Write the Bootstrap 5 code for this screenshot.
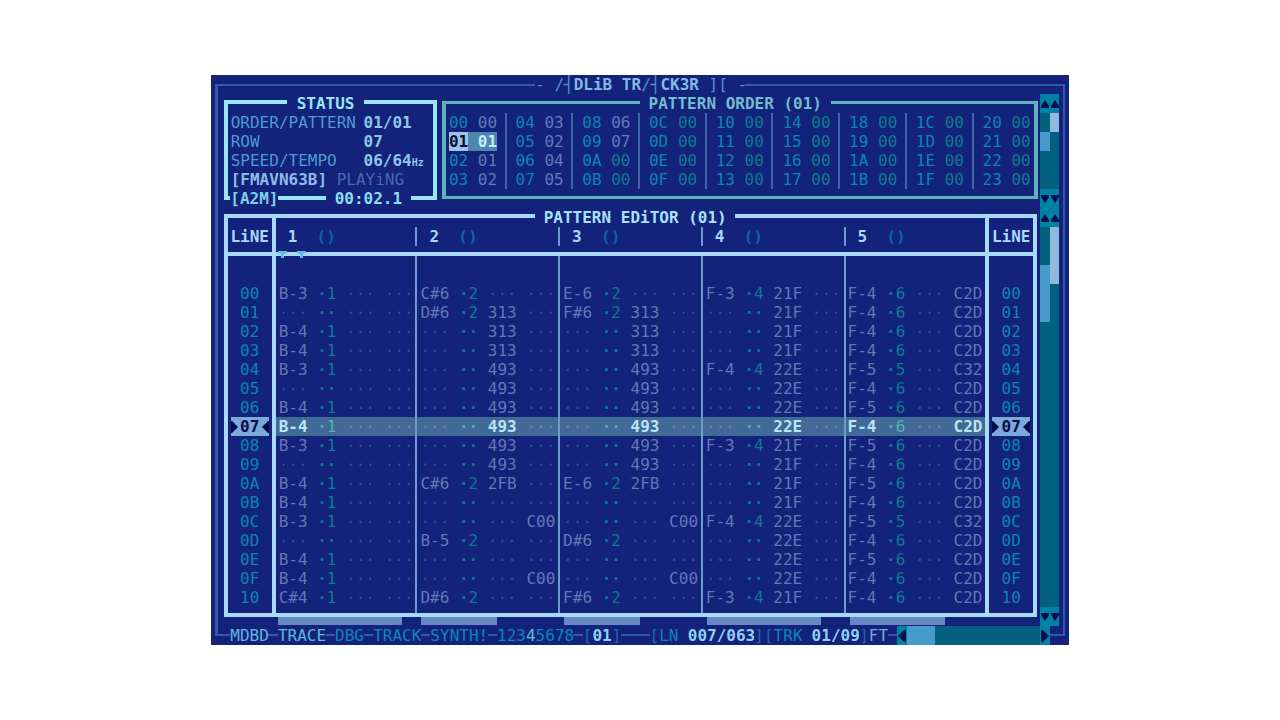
<!DOCTYPE html>
<html lang="en">
<head>
<meta charset="utf-8">
<meta name="viewport" content="width=device-width, initial-scale=1">
<title>AdLib Tracker ][</title>
<link href="https://cdn.jsdelivr.net/npm/bootstrap@5.3.0/dist/css/bootstrap.min.css" rel="stylesheet">
<style>
  :root { --ink:#13227a; --pale:#a9d9f6; --ice:#9be5f5; --sea:#62b2bd; --cyan:#0a86b0; --teal:#0a7c92; --grey:#6377b4; --rule:#7099d2; --faint:#334c98; }
  body { background:#fff; font-family:"DejaVu Sans Mono","Liberation Mono",monospace; font-size:16px; line-height:19px; }
  /* 90 text columns by 30 text rows */
  .screen { width:67vw; min-width:800px; background:var(--ink); color:var(--pale); display:grid; grid-template-columns:repeat(90,minmax(0,1fr)); grid-auto-rows:minmax(19px,auto); }
  .on, .foot, .mode, .order-list > div, .editor td, .editor thead span { white-space:pre; }
  .frame { grid-column:1/-1; grid-row:1/31; margin:9px 4px; border:2px solid #315aa9; border-left-width:3px; }
  .on { background:var(--ink); z-index:1; }
  .headline { grid-area:1/35/2/57; color:#5a8fc8; font-size:16px; line-height:19px; font-weight:400; }
  .headline b { color:#82b9e5; }
  .status { grid-area:2/2/8/25; margin:6px 3px 8px; border:4px solid var(--ice); padding:9px 3px 0; color:#4c9ccf; }
  .status dl { display:grid; grid-template-columns:2fr 1fr; }
  .status dt { font-weight:400; } .status dd { color:#8fc6e6; font-weight:700; }
  .hz { font-size:10px; line-height:10px; }
  .t-status { grid-area:2/9/3/17; color:var(--ice); }
  .t-file { grid-area:7/3/8/8; color:#7fd0ea; }
  .t-time { grid-area:7/13/8/22; color:#90dcf2; }
  .order { grid-area:2/25/8/88; margin:7px 2px 9px; border:4px solid var(--sea); border-width:3px 4px; padding-top:9px; overflow:hidden; }
  .order-list { display:grid; grid-template-columns:repeat(9,1fr); margin:0 -6px; }
  .order-list > div { padding-left:9px; border-right:2px solid #3f62a8; color:var(--cyan); }
  .order-list > div:last-child { border-right:0; }
  .order-list .used { color:#6579b8; } .order-list .unused { color:var(--teal); }
  .order-list .now { background:#5085ad; color:#c3ecff; font-weight:700; display:inline-block; }
  .order-list .now i { background:#9cc4e6; color:#060d38; font-style:normal; display:inline-block; }
  .t-order { grid-area:2/46/3/66; color:#73bccb; }
  .t-editor { grid-area:8/35/9/56; color:#a8e1fa; }
  .editor { grid-area:8/2/30/88; margin:6px 3px 9px; border:4px solid var(--pale); }
  .editor table { width:100%; table-layout:fixed; border-collapse:separate; border-spacing:0; }
  .editor th { font-weight:400; padding:0; }
  .editor thead th { height:38px; padding-top:9px; border-bottom:4px solid var(--pale); vertical-align:top; font-weight:700; }
  .editor thead span { display:block; height:19px; }
  .editor thead .trk span { border-right:2px solid var(--rule); padding-left:12px; }
  .editor thead .trk.edge span { border-right:0; }
  .editor thead em { font-style:normal; color:#0a659b; }
  .editor td { padding:0 0 0 3px; color:var(--grey); border-right:2px solid var(--rule); overflow:hidden; }
  .editor tr > .edge { border-right:4px solid var(--pale); }
  .editor td.edge { padding-left:2px; }
  .editor tbody th { text-align:center; color:var(--cyan); }
  .editor .gap td, .editor .gap th { height:28px; } .editor .tail td, .editor .tail th { height:6px; line-height:0; }
  .editor s { text-decoration:none; color:var(--faint); } .editor u { text-decoration:none; color:var(--teal); }
  .editor .now td { background:#426a96; color:#b9e5fb; font-weight:700; background-clip:padding-box; }
  .editor .now td s { color:#6484a8; font-weight:400; } .editor .now td u { color:#53b0b4; font-weight:400; }
  .editor .now th mark { background:#7aa9da; color:#060d48; padding:0; display:flex; align-items:center; justify-content:space-between; margin:0 3px; font-weight:700; }
  .editor mark svg { fill:#060d48; }
  .marker { z-index:2; grid-row:10; fill:#62bfe0; margin-top:5px; }
  .usage { grid-row:29; height:8px; margin-top:10px; background:#6788c4; z-index:1; }
  .foot { grid-row:30; }
  .foot.a { color:#5fb8e0; } .foot.b { color:#0a86bc; } .foot.c, .foot .lit { color:#8fd0f0; font-weight:700; } .foot.e { color:#1b68ac; }
  .bar { background:#00607e; display:grid; z-index:1; }
  .bar-v { grid-column:88/90; grid-template-columns:1fr 1fr; grid-auto-rows:19px; }
  .bar-h { grid-area:30/73/31/89; grid-template-columns:repeat(16,1fr); }
  .bar button { border:0; padding:0; background:#0082a4; grid-column:1/-1; display:flex; align-items:center; justify-content:center; }
  .bar-h button { grid-column:auto; }
  .bar svg { fill:#07104e; display:block; }
  .th-a { background:#479bcb; } .th-b { background:#91b9dc; }
</style>
</head>
<body class="min-vh-100 d-flex align-items-center justify-content-center">
<main class="screen">
  <div class="frame"></div>
  <h1 class="headline on m-0">- ∕┤<b>DLiB TR</b>∕┤<b>CK3R</b> ][ -</h1>

  <section class="status">
    <dl class="m-0"><dt>ORDER/PATTERN</dt><dd class="m-0">01/01</dd><dt>ROW</dt><dd class="m-0">07</dd><dt>SPEED/TEMPO</dt><dd class="m-0">06/64<span class="hz">Hz</span></dd></dl>
    <div class="mode"><span style="color:#8ebce6" class="fw-bold">[FMAVN63B]</span> <span style="color:#496bae">PLAYiNG</span></div>
  </section>
  <div class="t-status on text-center fw-bold">STATUS</div>
  <div class="t-file on fw-bold">[A2M]</div>
  <div class="t-time on text-center fw-bold">00:02.1</div>

  <section class="order"><div class="order-list" id="orders"></div></section>
  <div class="t-order on text-center fw-bold">PATTERN ORDER (01)</div>

  <section class="editor">
    <table>
      <colgroup><col style="width:5.95%"><col style="width:17.6%"><col style="width:17.72%"><col style="width:17.72%"><col style="width:17.72%"><col style="width:17.84%"><col style="width:5.45%"></colgroup>
      <thead><tr>
        <th class="edge text-center"><span>LiNE</span></th>
        <th class="trk"><span>1  <em>()</em></span></th><th class="trk"><span>2  <em>()</em></span></th><th class="trk"><span>3  <em>()</em></span></th><th class="trk"><span>4  <em>()</em></span></th><th class="trk edge"><span>5  <em>()</em></span></th>
        <th class="text-center"><span>LiNE</span></th>
      </tr></thead>
      <tbody id="lines"></tbody>
    </table>
  </section>
  <div class="t-editor on text-center fw-bold">PATTERN EDiTOR (01)</div>
  <svg class="marker" style="grid-column:8/11" width="28" height="8" viewBox="0 0 28 8"><path d="M0 0h9v2l-3 1v4H3V3L0 2zM19 0h9v2l-3 1v4h-3V3l-3-1z"/></svg>

  <div class="usage" style="grid-column:8/21"></div>
  <div class="usage" style="grid-column:23/31"></div>
  <div class="usage" style="grid-column:38/46"></div>
  <div class="usage" style="grid-column:53/65"></div>
  <div class="usage" style="grid-column:68/78"></div>

  <div class="foot on a" style="grid-column:3/7">MDBD</div>
  <div class="foot on a" style="grid-column:8/13">TRACE</div>
  <div class="foot on b" style="grid-column:14/17">DBG</div>
  <div class="foot on b" style="grid-column:18/23">TRACK</div>
  <div class="foot on b" style="grid-column:24/30">SYNTH!</div>
  <div class="foot on b" style="grid-column:31/39">123<span style="color:#62bde5">4</span>5678</div>
  <div class="foot on e" style="grid-column:40/44">[<span class="lit">01</span>]</div>
  <div class="foot on e" style="grid-column:47/50">[<span style="color:#0a86bc">LN</span></div>
  <div class="foot on c" style="grid-column:50/58"> 007/063</div>
  <div class="foot on e" style="grid-column:58/63">][<span style="color:#0a86bc">TRK</span></div>
  <div class="foot on c" style="grid-column:63/69"> 01/09</div>
  <div class="foot on e" style="grid-column:69/72">]<span style="color:#74a7df">FT</span></div>

  <div class="bar bar-v" style="grid-row:2/8">
    <button type="button" aria-label="Orders up"><svg width="18" height="8" viewBox="0 0 18 8"><path d="M4 0 8 6V8H0V6zM14 0l4 6V8h-8V6z"/></svg></button>
    <span class="th-b" style="grid-area:2/2/3/3"></span><span class="th-a" style="grid-area:3/1/4/2"></span>
    <button type="button" aria-label="Orders down" style="grid-row:6"><svg width="18" height="8" viewBox="0 0 18 8"><path d="M0 0H8V2L4 8 0 2zM10 0h8V2l-4 6-4-6z"/></svg></button>
  </div>
  <div class="bar bar-v" style="grid-row:8/30">
    <button type="button" aria-label="Lines up"><svg width="18" height="8" viewBox="0 0 18 8"><path d="M4 0 8 6V8H0V6zM14 0l4 6V8h-8V6z"/></svg></button>
    <span class="th-b" style="grid-area:2/2/5/3"></span><span class="th-a" style="grid-area:4/1/7/2"></span>
    <button type="button" aria-label="Lines down" style="grid-row:22"><svg width="18" height="8" viewBox="0 0 18 8"><path d="M0 0H8V2L4 8 0 2zM10 0h8V2l-4 6-4-6z"/></svg></button>
  </div>
  <div class="bar bar-h">
    <button type="button" aria-label="Tracks left"><svg width="8" height="12" viewBox="0 0 8 12"><path d="M0 6 6 0h2v12H6z"/></svg></button>
    <span class="th-a" style="grid-column:2/5"></span>
    <button type="button" aria-label="Tracks right" style="grid-column:16"><svg width="8" height="12" viewBox="0 0 8 12"><path d="M8 6 2 0H0v12h2z"/></svg></button>
  </div>
</main>
<script>
  const hex = n => n.toString(16).toUpperCase().padStart(2, '0');

  // song order: nine groups of four positions
  const order = ['00','01','01','02','03','02','04','05','06','07'];
  let groups = '';
  for (let g = 0; g < 9; g++) {
    groups += '<div>';
    for (let r = 0; r < 4; r++) {
      const n = g * 4 + r;
      groups += (n === 1 ? '<span class="now"><i>01</i> 01</span>'
        : hex(n) + ' <span class="' + (order[n] ? 'used' : 'unused') + '">' + (order[n] || '00') + '</span>') + (r < 3 ? '\n' : '');
    }
    groups += '</div>';
  }
  document.getElementById('orders').innerHTML = groups;

  // per line: note, instrument, first effect, second effect for each track
  const t1 = 'B-3,,B-4,B-4,B-3,,B-4,B-4,B-3,,B-4,B-4,B-3,,B-4,B-4,C#4'.split(',').map(n => [n, n && '1']);
  const fx = ',313,313,313,493,493,493,493,493,493,2FB,,,,,,'.split(',');
  const lead = notes => fx.map((f, i) => [notes[i] || '', notes[i] ? '2' : '', f, i === 12 || i === 15 ? 'C00' : '']);
  const t2 = lead({0:'C#6', 1:'D#6', 10:'C#6', 13:'B-5', 16:'D#6'});
  const t3 = lead({0:'E-6', 1:'F#6', 10:'E-6', 13:'D#6', 16:'F#6'});
  const t4 = fx.map((_, i) => [i % 4 ? '' : i % 8 ? 'F-4' : 'F-3', i % 4 ? '' : '4', i % 8 > 3 ? '22E' : '21F']);
  const high = [4, 6, 8, 10, 12, 14];
  const t5 = fx.map((_, i) => { const k = i === 4 || i === 12; return [high.includes(i) ? 'F-5' : 'F-4', k ? '5' : '6', '', k ? 'C32' : 'C2D']; });

  const dots = '<s>···</s>';
  const cell = ([n, ins, a, b]) => (n || dots) + ' <u><b>·</b>' + (ins || '<b>·</b>') + '</u> ' + (a || dots) + ' ' + (b || dots);
  const blank = c => '<tr class="' + c + '"><th class="edge"></th><td></td><td></td><td></td><td></td><td class="edge"></td><th></th></tr>';
  const arrow = d => '<svg width="8" height="12" viewBox="0 0 8 12"><path d="' + d + '"/></svg>';
  let rows = blank('gap');
  for (let i = 0; i < 17; i++) {
    const label = i === 7 ? '<mark>' + arrow('M0 0h1l6 6-6 6H0z') + '07' + arrow('M8 0H7L1 6l6 6h1z') + '</mark>' : hex(i);
    rows += '<tr' + (i === 7 ? ' class="now"' : '') + '><th class="edge">' + label + '</th>'
      + [t1, t2, t3, t4, t5].map((t, k) => '<td' + (k === 4 ? ' class="edge"' : '') + '>' + cell(t[i]) + '</td>').join('')
      + '<th>' + label + '</th></tr>';
  }
  document.getElementById('lines').innerHTML = rows + blank('tail');
</script>
<script src="https://cdn.jsdelivr.net/npm/bootstrap@5.3.0/dist/js/bootstrap.bundle.min.js"></script>
</body>
</html>
